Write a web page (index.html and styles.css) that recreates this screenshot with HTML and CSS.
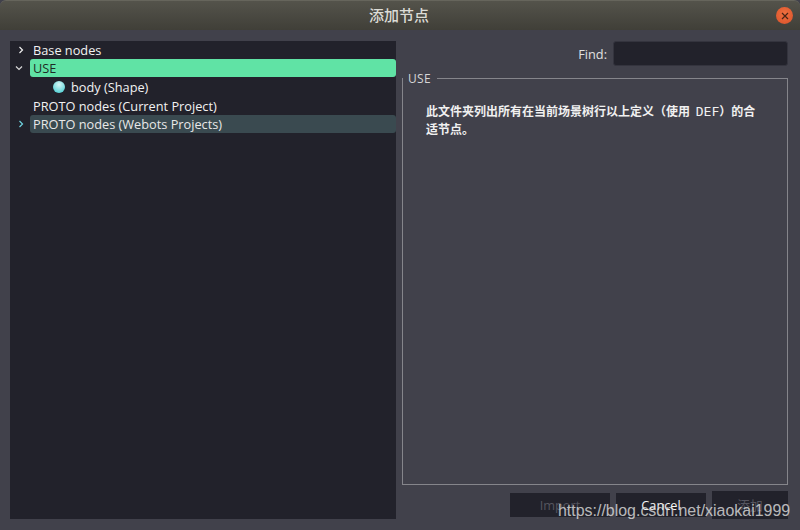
FILE: index.html
```html
<!DOCTYPE html>
<html lang="zh">
<head>
    <meta charset="UTF-8">
    <meta name="viewport" content="width=device-width, initial-scale=1.0">
    <title>添加节点</title>
    <link rel="stylesheet" href="styles.css">
</head>
<body>
    <div class="window">
        <div class="titlebar">
            <span class="title">添加节点</span>
            <span class="close">
                <svg width="8" height="8" viewBox="0 0 8 8"><path d="M1 1l6 6M7 1l-6 6" stroke="#4a2415" stroke-width="1.2" fill="none"/></svg>
            </span>
        </div>
        <div class="content">
            <div class="tree">
                <div class="row">
                    <svg class="arrow" viewBox="0 0 8 8"><path d="M2.5 1l3 3-3 3" stroke="#f0f0f0" stroke-width="1.2" fill="none"/></svg>
                    <span class="label">Base nodes</span>
                </div>
                <div class="row">
                    <svg class="arrow down" viewBox="0 0 8 8"><path d="M1 2.5l3 3 3-3" stroke="#d8d8d8" stroke-width="1.2" fill="none"/></svg>
                    <span class="label selected">USE</span>
                </div>
                <div class="row child">
                    <span class="ball"></span>
                    <span class="child-label">body (Shape)</span>
                </div>
                <div class="row">
                    <span class="arrow"></span>
                    <span class="label">PROTO nodes (Current Project)</span>
                </div>
                <div class="row">
                    <svg class="arrow" viewBox="0 0 8 8"><path d="M2.5 1l3 3-3 3" stroke="#6fd3e0" stroke-width="1.2" fill="none"/></svg>
                    <span class="label hovered">PROTO nodes (Webots Projects)</span>
                </div>
            </div>
            <div class="side">
                <div class="find">
                    <label class="find-label">Find:</label>
                    <div class="find-input"></div>
                </div>
                <div class="group">
                    <span class="legend">USE</span>
                    <p class="info">此文件夹列出所有在当前场景树行以上定义（使用 <span class="mono">DEF</span>）的合适节点。</p>
                </div>
                <div class="buttons">
                    <div class="btn btn-import disabled">Import</div>
                    <div class="btn btn-cancel">Cancel</div>
                    <div class="btn btn-add disabled">添加</div>
                </div>
            </div>
        </div>
        <div class="watermark">https://blog.csdn.net/xiaokai1999</div>
    </div>
</body>
</html>
```

FILE: styles.css
```css
html, body {
    margin: 0;
    height: 100%;
    background: #41414b;
}
.window {
    width: 800px;
    height: 530px;
    position: relative;
    overflow: hidden;
    display: flex;
    flex-direction: column;
    background: #41414b;
    color: #f2f2f2;
    font-family: "Open Sans", "Noto Sans", "Noto Sans CJK SC", sans-serif;
    font-size: 12.75px;
}
.titlebar {
    height: 30px;
    flex: none;
    position: relative;
    display: flex;
    align-items: center;
    justify-content: center;
    padding: 0 2px 2px 0;
    background: linear-gradient(#54534b, #403f38);
    border-top: 1px solid #66655c;
    box-sizing: border-box;
    border-radius: 6px 6px 0 0;
}
.title {
    font-family: "Noto Sans CJK SC", sans-serif;
    font-size: 15px;
    font-weight: 500;
    color: #dcdcd6;
}
.close {
    position: absolute;
    right: 7px;
    top: 6px;
    width: 17px;
    height: 17px;
    border-radius: 50%;
    background: radial-gradient(circle at 50% 40%, #f0703f, #d9512a);
    display: flex;
    align-items: center;
    justify-content: center;
}
.content {
    flex: 1;
    display: flex;
    gap: 6px;
    padding: 11px 12px 11px 10px;
}
.tree {
    width: 386px;
    flex: none;
    box-sizing: border-box;
    background: #22222b;
}
.row {
    display: flex;
    align-items: center;
    height: 18px;
}
.row:nth-child(3), .row:nth-child(4) {
    height: 19px;
}
.arrow {
    width: 8px;
    height: 8px;
    flex: none;
    margin: 0 5px 0 7px;
}
.arrow.down {
    margin-left: 5px;
    margin-right: 7px;
}
.label {
    flex: 1;
    height: 18px;
    line-height: 18px;
    padding-left: 3px;
    border-radius: 3px;
    white-space: nowrap;
}
.selected {
    background: #60e3a5;
    color: #1e2a26;
}
.hovered {
    background: #3a4a50;
    color: #e8e8e8;
}
.child {
    padding-left: 43px;
}
.ball {
    width: 12px;
    height: 12px;
    border-radius: 50%;
    background: radial-gradient(circle at 50% 30%, #d8f6f6, #5fd4d8 75%);
    margin-right: 6px;
}
.child-label {
    white-space: nowrap;
    line-height: 19px;
    padding-top: 1px;
}
.side {
    flex: 1;
    display: flex;
    flex-direction: column;
}
.find {
    display: flex;
    justify-content: flex-end;
    align-items: center;
    gap: 6px;
    height: 25px;
}
.find-label {
    color: #e0e0e0;
}
.find-input {
    width: 173px;
    height: 23px;
    background: #22222b;
    border: 1px solid #34343e;
    border-radius: 3px;
}
.group {
    position: relative;
    flex: 1;
    margin-top: 12px;
    border: 1px solid #85858b;
    box-sizing: border-box;
    padding: 23px 23px 0;
}
.legend {
    position: absolute;
    top: -8px;
    left: 0;
    padding: 0 6px 0 5px;
    background: #41414b;
    font-size: 12px;
    line-height: 16px;
    color: #d6d6d6;
    letter-spacing: 0.3px;
}
.info {
    margin: 0;
    font-family: "Noto Sans CJK SC", sans-serif;
    font-size: 12px;
    font-weight: 700;
    line-height: 17px;
    color: #f0f0f0;
}
.mono {
    font-family: "DejaVu Sans Mono", monospace;
    font-weight: 400;
    font-size: 13px;
    margin-left: 3px;
}
.buttons {
    display: flex;
    justify-content: flex-end;
    align-items: center;
    gap: 6px;
    height: 28px;
    margin-top: 6px;
}
.btn {
    height: 24px;
    line-height: 24px;
    text-align: center;
    background: #22222b;
    color: #f4f4f4;
}
.btn.disabled {
    color: #55555f;
}
.btn-import {
    width: 100px;
}
.btn-cancel {
    width: 90px;
}
.btn-add {
    width: 76px;
    height: 28px;
    line-height: 28px;
    font-family: "Noto Sans CJK SC", sans-serif;
}
.watermark {
    position: absolute;
    left: 558px;
    top: 501px;
    font-family: "Liberation Sans", Arial, sans-serif;
    font-size: 15.95px;
    line-height: 20px;
    color: rgba(225, 225, 225, 0.8);
    white-space: nowrap;
}
```
